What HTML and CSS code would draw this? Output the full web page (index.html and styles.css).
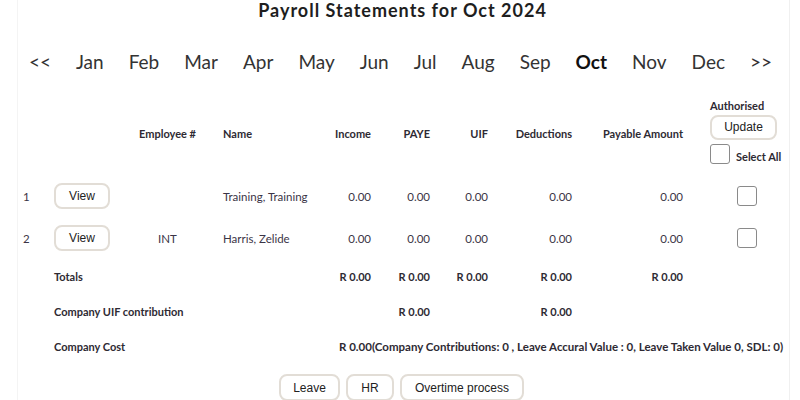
FILE: index.html
```html
<!DOCTYPE html>
<html>
<head>
<meta charset="utf-8">
<link rel="stylesheet" href="styles.css">
</head>
<body>
<div class="page">
  <h1 class="title">Payroll Statements for Oct 2024</h1>
  <nav class="months">
    <a>&lt;&lt;</a><a>Jan</a><a>Feb</a><a>Mar</a><a>Apr</a><a>May</a><a>Jun</a><a>Jul</a><a>Aug</a><a>Sep</a><a class="current">Oct</a><a>Nov</a><a>Dec</a><a>&gt;&gt;</a>
  </nav>
  <table class="payroll">
    <colgroup>
      <col class="c0"><col class="c1"><col class="c2"><col class="c3"><col class="c4"><col class="c5"><col class="c6"><col class="c7"><col class="c8"><col class="c9">
    </colgroup>
    <thead>
      <tr class="head">
        <th></th>
        <th></th>
        <th class="center">Employee #</th>
        <th class="left name">Name</th>
        <th class="num">Income</th>
        <th class="num">PAYE</th>
        <th class="num">UIF</th>
        <th class="num">Deductions</th>
        <th class="num">Payable Amount</th>
        <th class="auth">
          <div class="auth-label">Authorised</div>
          <button class="btn">Update</button>
          <label class="select-all"><span class="check"></span><span>Select All</span></label>
        </th>
      </tr>
    </thead>
    <tbody>
      <tr class="row">
        <td class="idx">1</td>
        <td><button class="btn view">View</button></td>
        <td class="center"></td>
        <td class="name">Training, Training</td>
        <td class="num">0.00</td>
        <td class="num">0.00</td>
        <td class="num">0.00</td>
        <td class="num">0.00</td>
        <td class="num">0.00</td>
        <td class="chk"><span class="check"></span></td>
      </tr>
      <tr class="row">
        <td class="idx">2</td>
        <td><button class="btn view">View</button></td>
        <td class="center">INT</td>
        <td class="name">Harris, Zelide</td>
        <td class="num">0.00</td>
        <td class="num">0.00</td>
        <td class="num">0.00</td>
        <td class="num">0.00</td>
        <td class="num">0.00</td>
        <td class="chk"><span class="check"></span></td>
      </tr>
      <tr class="sum">
        <td></td>
        <td colspan="3" class="label">Totals</td>
        <td class="num">R 0.00</td>
        <td class="num">R 0.00</td>
        <td class="num">R 0.00</td>
        <td class="num">R 0.00</td>
        <td class="num">R 0.00</td>
        <td></td>
      </tr>
      <tr class="sum">
        <td></td>
        <td colspan="3" class="label">Company UIF contribution</td>
        <td></td>
        <td class="num">R 0.00</td>
        <td></td>
        <td class="num">R 0.00</td>
        <td></td>
        <td></td>
      </tr>
      <tr class="sum">
        <td></td>
        <td colspan="3" class="label">Company Cost</td>
        <td colspan="6" class="cost">R 0.00(Company Contributions: 0 , Leave Accural Value : 0, Leave Taken Value 0, SDL: 0)</td>
      </tr>
    </tbody>
  </table>
  <div class="actions">
    <button class="btn action leave">Leave</button>
    <button class="btn action hr">HR</button>
    <button class="btn action overtime">Overtime process</button>
  </div>
</div>
</body>
</html>
```
FILE: styles.css
```css
html, body {
  margin: 0;
  padding: 0;
  background: #ffffff;
}
body {
  font-family: Lato, "Noto Sans", sans-serif;
  color: #333;
  overflow: hidden;
}
.page {
  margin: 0 10px 0 17px;
  border-left: 1px solid #f4f4f4;
  border-right: 1px solid #f0f0f0;
  height: 400px;
  box-sizing: border-box;
}
.title {
  margin: 0;
  font-size: 18px;
  line-height: 20px;
  letter-spacing: 1px;
  font-weight: 700;
  text-align: center;
  color: #1e1e1e;
  padding-right: 2px;
}
.months {
  display: flex;
  justify-content: center;
  gap: 25px;
  margin-top: 31px;
  padding-right: 6px;
  font-size: 19px;
  line-height: 22px;
  color: #333;
}
.months .current {
  font-weight: 700;
  color: #111;
}
.payroll {
  border-collapse: collapse;
  table-layout: fixed;
  width: 773px;
  margin-top: 16px;
  font-size: 11px;
}
.c0 { width: 28px; }
.c1 { width: 80px; }
.c2 { width: 83px; }
.c3 { width: 110px; }
.c4 { width: 60px; }
.c5 { width: 59px; }
.c6 { width: 58px; }
.c7 { width: 84px; }
.c8 { width: 111px; }
.c9 { width: 100px; }
th, td {
  padding: 0;
  white-space: nowrap;
}
th {
  font-weight: 700;
  color: #2e2a33;
}
.head {
  height: 86px;
}
.head th {
  vertical-align: middle;
  padding-top: 3px;
}
.center { text-align: center; }
.left { text-align: left; }
.num {
  text-align: right;
  padding-right: 8px;
}
.name {
  text-align: left;
  padding-left: 14px;
}
.auth {
  text-align: left;
  padding-left: 19px;
}
.auth-label {
  line-height: 12px;
  margin-top: -2px;
}
.btn {
  font-family: "Liberation Sans", Arial, sans-serif;
  background: #fff;
  color: #222;
  border: 2px solid #e2ddd6;
  border-radius: 8px;
  cursor: pointer;
}
.auth .btn {
  display: block;
  margin-top: 3px;
  width: 67px;
  height: 25px;
  font-size: 12px;
  padding: 0;
}
.select-all {
  display: flex;
  align-items: flex-end;
  gap: 6px;
  margin-top: 4px;
  margin-bottom: 2px;
}
.check {
  display: inline-block;
  box-sizing: border-box;
  width: 20px;
  height: 20px;
  border: 1.5px solid #8a8a8a;
  border-radius: 3px;
  background: #fff;
}
.select-all span:last-child {
  line-height: 12px;
  margin-bottom: 1px;
}
.row {
  height: 42px;
  color: #3b3446;
  font-size: 11.5px;
}
.row td {
  vertical-align: middle;
}
.idx {
  padding-left: 5px;
}
.view {
  margin-left: 8px;
  width: 56px;
  height: 26px;
  padding: 0;
  font-size: 12px;
}
.chk {
  padding-left: 46px;
}
.chk .check {
  display: block;
}
.sum {
  height: 35px;
  font-weight: 700;
  color: #2e2a33;
}
.sum td {
  vertical-align: middle;
}
.label {
  padding-left: 8px;
}
.cost {
  padding-left: 20px;
  font-size: 11.5px;
}
.actions {
  display: flex;
  justify-content: center;
  gap: 6px;
  margin-top: 10px;
  padding-right: 4px;
}
.action {
  height: 27px;
  padding: 0;
  font-size: 12px;
}
.leave { width: 61px; }
.hr { width: 48px; }
.overtime { width: 124px; }
```
